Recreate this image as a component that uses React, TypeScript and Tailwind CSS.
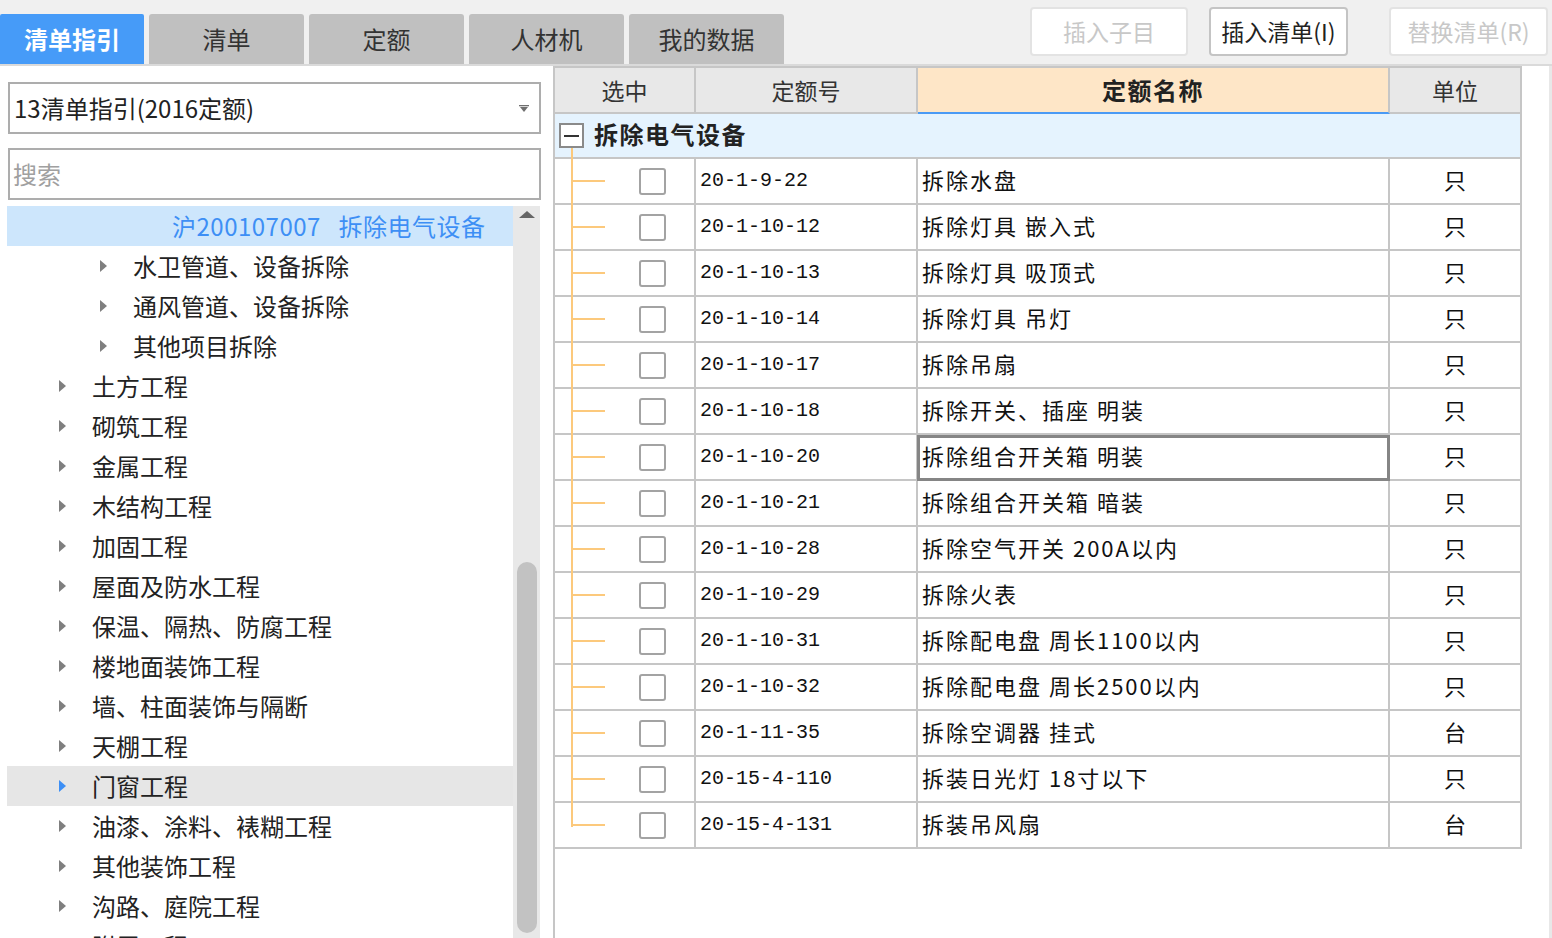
import React from 'react';

// Quota picker window: guide tree on the left, quota table on the right
const tabs = ['清单指引', '清单', '定额', '人材机', '我的数据'];

type Node = { level: 1 | 2 | 3; text: string; active?: boolean; hover?: boolean };

const tree: Node[] = [
  { level: 3, text: '沪200107007   拆除电气设备', active: true },
  { level: 2, text: '水卫管道、设备拆除' },
  { level: 2, text: '通风管道、设备拆除' },
  { level: 2, text: '其他项目拆除' },
  { level: 1, text: '土方工程' },
  { level: 1, text: '砌筑工程' },
  { level: 1, text: '金属工程' },
  { level: 1, text: '木结构工程' },
  { level: 1, text: '加固工程' },
  { level: 1, text: '屋面及防水工程' },
  { level: 1, text: '保温、隔热、防腐工程' },
  { level: 1, text: '楼地面装饰工程' },
  { level: 1, text: '墙、柱面装饰与隔断' },
  { level: 1, text: '天棚工程' },
  { level: 1, text: '门窗工程', hover: true },
  { level: 1, text: '油漆、涂料、裱糊工程' },
  { level: 1, text: '其他装饰工程' },
  { level: 1, text: '沟路、庭院工程' },
  { level: 1, text: '附属工程' },
];

const rows = [
  ['20-1-9-22', '拆除水盘', '只'],
  ['20-1-10-12', '拆除灯具 嵌入式', '只'],
  ['20-1-10-13', '拆除灯具 吸顶式', '只'],
  ['20-1-10-14', '拆除灯具 吊灯', '只'],
  ['20-1-10-17', '拆除吊扇', '只'],
  ['20-1-10-18', '拆除开关、插座 明装', '只'],
  ['20-1-10-20', '拆除组合开关箱 明装', '只'],
  ['20-1-10-21', '拆除组合开关箱 暗装', '只'],
  ['20-1-10-28', '拆除空气开关 200A以内', '只'],
  ['20-1-10-29', '拆除火表', '只'],
  ['20-1-10-31', '拆除配电盘 周长1100以内', '只'],
  ['20-1-10-32', '拆除配电盘 周长2500以内', '只'],
  ['20-1-11-35', '拆除空调器 挂式', '台'],
  ['20-15-4-110', '拆装日光灯 18寸以下', '只'],
  ['20-15-4-131', '拆装吊风扇', '台'],
];

const Caret = ({ active }: { active?: boolean }) => (
  <svg width="7" height="12" viewBox="0 0 7 12" className="shrink-0">
    <path d="M0 0 L7 6 L0 12 Z" fill={active ? '#3d8ff5' : '#7f7f7f'} />
  </svg>
);

export default function App() {
  return (
    <div className="flex h-[938px] w-[1552px] flex-col overflow-hidden bg-white font-['Noto_Sans_CJK_SC','Noto_Sans',sans-serif] text-[#222]">
      {/* top bar */}
      <div className="flex h-[64px] items-start bg-[#f0f0f0]">
        <div className="flex gap-[5px] self-end">
          {tabs.map((t, i) => (
            <div
              key={t}
              className={
                i === 0
                  ? 'flex h-[50px] w-[144px] items-center justify-center rounded-t-[2px] bg-[#469bf8] text-[24px] font-bold text-white'
                  : 'flex h-[50px] w-[155px] items-center justify-center rounded-t-[3px] bg-[#c0c0c0] text-[24px] text-[#333]'
              }
            >
              {t}
            </div>
          ))}
        </div>
        <div className="ml-auto mr-[4px] mt-[7px] flex">
          <div className="flex h-[49px] w-[158px] items-center justify-center rounded-[4px] border-2 border-[#e3e3e3] bg-white text-[23px] text-[#c8c8c8]">
            插入子目
          </div>
          <div className="ml-[21px] flex h-[49px] w-[139px] items-center justify-center rounded-[4px] border-2 border-[#c4c4c4] bg-white text-[23px] text-[#222]">
            插入清单(I)
          </div>
          <div className="ml-[41px] flex h-[49px] w-[159px] items-center justify-center rounded-[4px] border-2 border-[#e3e3e3] bg-white text-[23px] text-[#c8c8c8]">
            替换清单(R)
          </div>
        </div>
      </div>
      <div className="h-[2px] bg-[#dadada]" />

      <div className="flex min-h-0 flex-1">
        {/* left panel */}
        <div className="flex w-[553px] flex-col pl-[7px] pt-[16px]">
          <div className="ml-[1px] flex h-[52px] w-[533px] items-center border-2 border-[#adadad] pl-[4px] text-[24px]">
            <span>13清单指引(2016定额)</span>
            <svg width="10" height="7" viewBox="0 0 10 7" className="ml-auto mr-[10px]">
              <rect x="0" y="0" width="10" height="1.3" fill="#6f6f6f" />
              <path d="M1 2 L9 2 L5 7 Z" fill="#6f6f6f" />
            </svg>
          </div>
          <div className="ml-[1px] mt-[14px] flex h-[52px] w-[533px] items-center border-2 border-[#adadad] pl-[3px]">
            <input
              placeholder="搜索"
              className="w-full bg-transparent text-[24px] outline-none placeholder:text-[#a0a0a0]"
            />
          </div>
          <div className="mt-[6px] flex min-h-0 flex-1">
            <div className="w-[506px] overflow-hidden">
              {tree.map((n) => (
                <div
                  key={n.text}
                  className={[
                    'flex h-[40px] items-center whitespace-pre text-[24px]',
                    n.level === 1 ? 'pl-[52px]' : n.level === 2 ? 'pl-[93px]' : 'pl-[165px] tracking-[0.5px]',
                    n.active ? 'bg-[#cde6fc] text-[#3d8ff5]' : n.hover ? 'bg-[#e6e6e6]' : '',
                  ].join(' ')}
                >
                  {n.level !== 3 && (
                    <span className="mr-[26px] flex">
                      <Caret active={n.hover} />
                    </span>
                  )}
                  {n.text}
                </div>
              ))}
            </div>
            <div className="flex w-[27px] flex-col bg-[#e8e8e8] pt-[5px]">
              <svg width="16" height="7" viewBox="0 0 16 7" className="mx-auto">
                <path d="M0 7 L8 0 L16 7 Z" fill="#666" />
              </svg>
              <div className="ml-[4px] mt-[344px] h-[371px] w-[20px] rounded-full bg-[#c2c2c2]" />
            </div>
          </div>
        </div>

        {/* right panel */}
        <div className="flex-1 border-l-2 border-r-[3px] border-l-[#c6c6c6] border-r-[#e8e8e8] bg-white">
          <div className="w-[967px] border-t-2 border-[#c6c6c6]">
            {/* header */}
            <div className="flex h-[46px] bg-[#e8e8e8] text-[23px] text-[#333]">
              <div className="flex w-[141px] items-center justify-center border-b-2 border-r-2 border-[#c6c6c6]">选中</div>
              <div className="flex w-[222px] items-center justify-center border-b-2 border-r-2 border-[#c6c6c6]">定额号</div>
              <div className="flex w-[472px] items-center justify-center border-b-2 border-r-2 border-[#c6c6c6] border-b-[#4a9af5] bg-[#fee6c7] text-[24px] font-bold tracking-[1.5px] text-[#222]">
                定额名称
              </div>
              <div className="flex w-[132px] items-center justify-center border-b-2 border-r-2 border-[#c6c6c6]">单位</div>
            </div>

            {/* group row */}
            <div className="relative flex h-[45px] items-center border-b-2 border-r-2 border-[#c6c6c6] bg-[#e5f3fe] pl-[4px]">
              <span className="relative z-10 flex h-[25px] w-[25px] items-center justify-center border-2 border-[#8a8a8a] bg-white">
                <span className="h-[2px] w-[15px] bg-[#333]" />
              </span>
              <span className="absolute bottom-[-2px] left-[16px] top-[33px] w-[2px] bg-[#fcc97c]" />
              <span className="ml-[10px] pb-[4px] text-[24px] font-bold tracking-[1.5px] text-[#222]">拆除电气设备</span>
            </div>

            {/* rows */}
            {rows.map(([code, name, unit], i) => (
              <div key={code} className="flex h-[46px] border-b-2 border-r-2 border-[#c6c6c6]">
                <div className="relative flex w-[141px] items-center border-r-2 border-[#c6c6c6] pl-[84px]">
                  <span
                    className={
                      i === rows.length - 1
                        ? 'absolute left-[16px] top-0 h-[24px] w-[2px] bg-[#fcc97c]'
                        : 'absolute bottom-[-2px] left-[16px] top-0 w-[2px] bg-[#fcc97c]'
                    }
                  />
                  <span className="absolute left-[16px] top-[21px] h-[2px] w-[34px] bg-[#fcc97c]" />
                  <span className="h-[27px] w-[27px] rounded-[3px] border-2 border-[#a3a3a3] bg-white" />
                </div>
                <div className="flex w-[222px] items-center border-r-2 border-[#c6c6c6] pl-[4px] font-['Liberation_Mono',monospace] text-[20px] text-[#111]">
                  {code}
                </div>
                <div className="relative flex w-[472px] items-center whitespace-pre border-r-2 border-[#c6c6c6] pb-[4px] pl-[4px] text-[22px] tracking-[2px] text-[#111]">
                  {name}
                  {i === 6 && (
                    <span className="absolute bottom-[-2px] left-[-1px] right-[-2px] top-0 border-[3px] border-[#858585]" />
                  )}
                </div>
                <div className="flex w-[130px] items-center justify-center pb-[4px] text-[22px] text-[#111]">{unit}</div>
              </div>
            ))}
          </div>
        </div>
      </div>
    </div>
  );
}
